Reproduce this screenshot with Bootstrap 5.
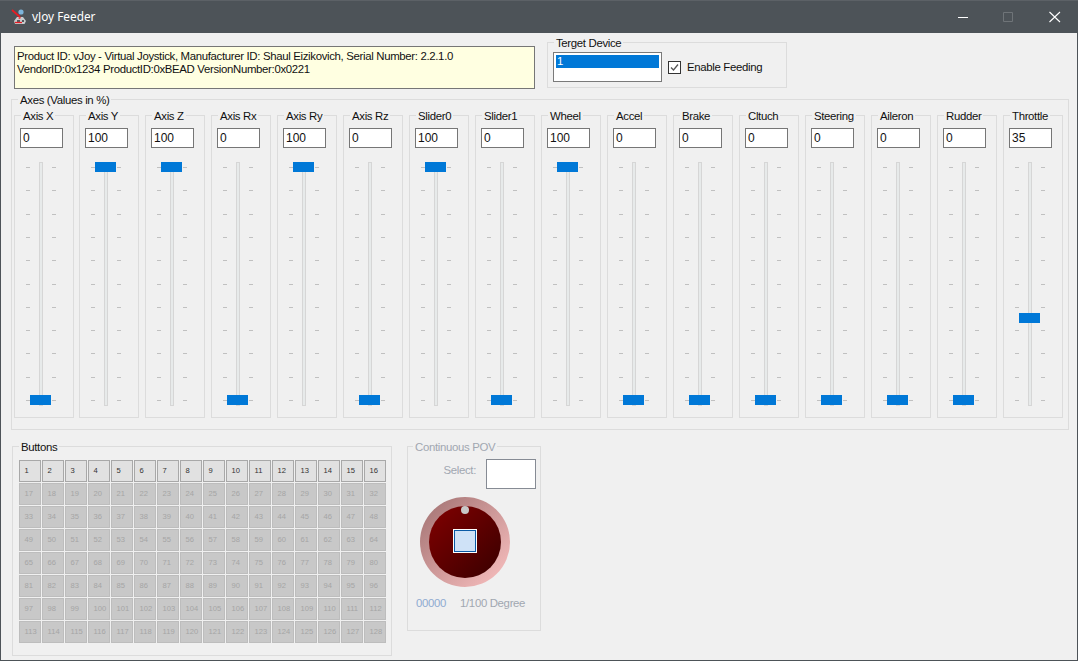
<!DOCTYPE html>
<html lang="en">
<head>
<meta charset="utf-8">
<title>vJoy Feeder</title>
<link href="https://cdn.jsdelivr.net/npm/bootstrap@5.3.0/dist/css/bootstrap.min.css" rel="stylesheet">
<style>
html,body{margin:0;height:100%;overflow:hidden;background:#f0f0f0}
body{font:11.4px/13px "Liberation Sans",Arial,sans-serif;letter-spacing:-.33px;color:#111}
.win{width:1078px;height:661px;border:1px solid #4d5358;border-top:0;background:#f0f0f0}
.titlebar{height:33px;margin:0 -1px;background:#4d5358;border-top:1px solid #5c6166;color:#fff;font:11.8px/1 "Noto Sans",sans-serif;letter-spacing:0}
.tb-icon{margin-left:11px;margin-right:5px}
.tb-ctl{width:46px;height:32px}
.pane{padding:2px 0 0 10px}
.gbox{border:1px solid #dcdcdc;margin:0;padding:0;min-width:0}
.gbox>legend{float:none;width:auto;height:14px;margin:0;padding:0 2px;font:inherit;line-height:16px;color:#111}
.info{width:521px;height:43px;margin:11px 0 0 3px;padding:3px 2px;border:1px solid #767676;background:#ffffe1;line-height:13px}
.tdev{width:240px;height:53px;margin-left:12px;padding:3px 5px 0}
.tdev>legend{margin-left:1px}
.lbox{width:109px;height:30px;padding:2px;background:#fff;border:1px solid #7a7a7a}
.lsel{background:#0078d7;color:#fff;height:13px;padding-left:1px}
.chk{width:13px;height:13px;margin-left:6px;border:1px solid #333;background:#fff;display:block}
.chk-l{margin-left:6px}
.axes{width:1058px;height:338px;margin-top:3px;padding:2px 2px 0}
.axes>legend{margin-left:4px}
.ax{width:60px;height:310px;margin-right:6px;padding:6px 5px 0;flex:none}
.ax-f{margin-right:5px}
.gbox.ax>legend{margin-left:1px;white-space:nowrap}
.val{width:43px;height:20px;border:1px solid #767676;background:#fff;padding:2px;line-height:15px;font-size:12px;letter-spacing:0;color:#111}
.sld{position:relative;width:46px;height:244px;margin-top:14px}
.sld::before,.sld::after{content:"";position:absolute;top:5px;width:4px;height:234px;background:repeating-linear-gradient(#c0c0c0 0 1px,transparent 1px 23.3px)}
.sld::before{left:6px}
.sld::after{left:32px}
.trk{position:absolute;left:19px;top:0;bottom:0;width:4px;background:#e7eaea;border:1px solid #d6d6d6}
.thm{position:absolute;left:10px;width:21px;height:10px;background:#0078d7}
.btns{width:380px;height:217px;margin:9px 0 0 1px;padding:7px 6px 0}
.bgrid{display:grid;grid-template-columns:repeat(16,22px);grid-auto-rows:22px;gap:1px}
.bc{border:1px solid #bdbdbd;background:#c8c8c8;color:#a5a5a5;font-size:7.6px;letter-spacing:0;line-height:20px;padding-left:4.500px}
.bc.on{border-color:#a8a8a8;background:#e1e1e1;color:#333}
.pov{width:134px;height:192px;margin:9px 0 0 15px;padding:6px 4px 0 0;color:#a1a7b0}
.gbox.pov>legend{color:#a1a7b0;margin-left:5px}
.sel-l{margin:0 10px 8px 0}
.sel-b{width:50px;height:30px;border:1px solid #868b94;background:#fff}
.knob{display:block;margin:7px 0 0 11px}
.pov-f{margin:9px 0 0 8px;line-height:13px}
.pov-n{color:#8fabd0;margin-right:14px}
</style>
</head>
<body>
<div class="win">
  <div class="titlebar d-flex align-items-center">
    <svg class="tb-icon" width="16" height="16" viewBox="0 0 16 16">
      <circle cx="10" cy="3" r="2.6" fill="#7db4dc"/>
      <path d="M3 12l3-4h6l3 4-1.500 3H4z" fill="#c9cbcd"/>
      <path d="M6 11h3v2H6zM11 11h2v2h-2z" fill="#55595d"/>
      <path d="M1 1l8 7" stroke="#e81c24" stroke-width="1.800"/>
      <path d="M4 13.500h7" stroke="#e81c24" stroke-width="1.300"/>
      <path d="M7 9l3-1-1 2z" fill="#e81c24"/>
    </svg>
    <span>vJoy Feeder</span>
    <span class="ms-auto d-flex">
      <svg class="tb-ctl" viewBox="0 0 46 32"><path d="M18 16.500h10" stroke="#fff"/></svg>
      <svg class="tb-ctl" viewBox="0 0 46 32"><path d="M17.500 11.500h9v9h-9z" fill="none" stroke="#6f7478"/></svg>
      <svg class="tb-ctl" viewBox="0 0 46 32"><path d="M17.500 11l10.500 10M28 11L17.500 21" stroke="#fff" stroke-width="1.100"/></svg>
    </span>
  </div>
  <div class="pane">
    <div class="d-flex align-items-start">
      <div class="info">Product ID: vJoy - Virtual Joystick, Manufacturer ID: Shaul Eizikovich, Serial Number: 2.2.1.0<br>VendorID:0x1234 ProductID:0xBEAD VersionNumber:0x0221</div>
      <fieldset class="gbox tdev">
        <legend>Terget Device</legend>
        <div class="d-flex align-items-center">
          <div class="lbox"><div class="lsel">1</div></div>
          <svg class="chk" viewBox="0 0 11 11"><path d="M2 5.500l2.500 2.500L9 2.500" fill="none" stroke="#555" stroke-width="1.300"/></svg>
          <span class="chk-l">Enable Feeding</span>
        </div>
      </fieldset>
    </div>
    <fieldset class="gbox axes">
      <legend>Axes (Values in %)</legend>
      <div class="d-flex">
        <fieldset class="gbox ax ax-f"><legend>Axis X</legend><div class="val">0</div><div class="sld"><div class="trk"></div><div class="thm" style="top:233px"></div></div></fieldset>
        <fieldset class="gbox ax"><legend>Axis Y</legend><div class="val">100</div><div class="sld"><div class="trk"></div><div class="thm" style="top:0"></div></div></fieldset>
        <fieldset class="gbox ax"><legend>Axis Z</legend><div class="val">100</div><div class="sld"><div class="trk"></div><div class="thm" style="top:0"></div></div></fieldset>
        <fieldset class="gbox ax"><legend>Axis Rx</legend><div class="val">0</div><div class="sld"><div class="trk"></div><div class="thm" style="top:233px"></div></div></fieldset>
        <fieldset class="gbox ax"><legend>Axis Ry</legend><div class="val">100</div><div class="sld"><div class="trk"></div><div class="thm" style="top:0"></div></div></fieldset>
        <fieldset class="gbox ax"><legend>Axis Rz</legend><div class="val">0</div><div class="sld"><div class="trk"></div><div class="thm" style="top:233px"></div></div></fieldset>
        <fieldset class="gbox ax"><legend>Slider0</legend><div class="val">100</div><div class="sld"><div class="trk"></div><div class="thm" style="top:0"></div></div></fieldset>
        <fieldset class="gbox ax"><legend>Slider1</legend><div class="val">0</div><div class="sld"><div class="trk"></div><div class="thm" style="top:233px"></div></div></fieldset>
        <fieldset class="gbox ax"><legend>Wheel</legend><div class="val">100</div><div class="sld"><div class="trk"></div><div class="thm" style="top:0"></div></div></fieldset>
        <fieldset class="gbox ax"><legend>Accel</legend><div class="val">0</div><div class="sld"><div class="trk"></div><div class="thm" style="top:233px"></div></div></fieldset>
        <fieldset class="gbox ax"><legend>Brake</legend><div class="val">0</div><div class="sld"><div class="trk"></div><div class="thm" style="top:233px"></div></div></fieldset>
        <fieldset class="gbox ax"><legend>Cltuch</legend><div class="val">0</div><div class="sld"><div class="trk"></div><div class="thm" style="top:233px"></div></div></fieldset>
        <fieldset class="gbox ax"><legend>Steering</legend><div class="val">0</div><div class="sld"><div class="trk"></div><div class="thm" style="top:233px"></div></div></fieldset>
        <fieldset class="gbox ax"><legend>Aileron</legend><div class="val">0</div><div class="sld"><div class="trk"></div><div class="thm" style="top:233px"></div></div></fieldset>
        <fieldset class="gbox ax"><legend>Rudder</legend><div class="val">0</div><div class="sld"><div class="trk"></div><div class="thm" style="top:233px"></div></div></fieldset>
        <fieldset class="gbox ax"><legend>Throttle</legend><div class="val">35</div><div class="sld"><div class="trk"></div><div class="thm" style="top:151px"></div></div></fieldset>
      </div>
    </fieldset>
    <div class="d-flex align-items-start">
      <fieldset class="gbox btns">
        <legend>Buttons</legend>
        <div class="bgrid">
          <div class="bc on">1</div><div class="bc on">2</div><div class="bc on">3</div><div class="bc on">4</div><div class="bc on">5</div><div class="bc on">6</div><div class="bc on">7</div><div class="bc on">8</div><div class="bc on">9</div><div class="bc on">10</div><div class="bc on">11</div><div class="bc on">12</div><div class="bc on">13</div><div class="bc on">14</div><div class="bc on">15</div><div class="bc on">16</div>
          <div class="bc">17</div><div class="bc">18</div><div class="bc">19</div><div class="bc">20</div><div class="bc">21</div><div class="bc">22</div><div class="bc">23</div><div class="bc">24</div><div class="bc">25</div><div class="bc">26</div><div class="bc">27</div><div class="bc">28</div><div class="bc">29</div><div class="bc">30</div><div class="bc">31</div><div class="bc">32</div>
          <div class="bc">33</div><div class="bc">34</div><div class="bc">35</div><div class="bc">36</div><div class="bc">37</div><div class="bc">38</div><div class="bc">39</div><div class="bc">40</div><div class="bc">41</div><div class="bc">42</div><div class="bc">43</div><div class="bc">44</div><div class="bc">45</div><div class="bc">46</div><div class="bc">47</div><div class="bc">48</div>
          <div class="bc">49</div><div class="bc">50</div><div class="bc">51</div><div class="bc">52</div><div class="bc">53</div><div class="bc">54</div><div class="bc">55</div><div class="bc">56</div><div class="bc">57</div><div class="bc">58</div><div class="bc">59</div><div class="bc">60</div><div class="bc">61</div><div class="bc">62</div><div class="bc">63</div><div class="bc">64</div>
          <div class="bc">65</div><div class="bc">66</div><div class="bc">67</div><div class="bc">68</div><div class="bc">69</div><div class="bc">70</div><div class="bc">71</div><div class="bc">72</div><div class="bc">73</div><div class="bc">74</div><div class="bc">75</div><div class="bc">76</div><div class="bc">77</div><div class="bc">78</div><div class="bc">79</div><div class="bc">80</div>
          <div class="bc">81</div><div class="bc">82</div><div class="bc">83</div><div class="bc">84</div><div class="bc">85</div><div class="bc">86</div><div class="bc">87</div><div class="bc">88</div><div class="bc">89</div><div class="bc">90</div><div class="bc">91</div><div class="bc">92</div><div class="bc">93</div><div class="bc">94</div><div class="bc">95</div><div class="bc">96</div>
          <div class="bc">97</div><div class="bc">98</div><div class="bc">99</div><div class="bc">100</div><div class="bc">101</div><div class="bc">102</div><div class="bc">103</div><div class="bc">104</div><div class="bc">105</div><div class="bc">106</div><div class="bc">107</div><div class="bc">108</div><div class="bc">109</div><div class="bc">110</div><div class="bc">111</div><div class="bc">112</div>
          <div class="bc">113</div><div class="bc">114</div><div class="bc">115</div><div class="bc">116</div><div class="bc">117</div><div class="bc">118</div><div class="bc">119</div><div class="bc">120</div><div class="bc">121</div><div class="bc">122</div><div class="bc">123</div><div class="bc">124</div><div class="bc">125</div><div class="bc">126</div><div class="bc">127</div><div class="bc">128</div>
        </div>
      </fieldset>
      <fieldset class="gbox pov">
        <legend>Continuous POV</legend>
        <div class="d-flex justify-content-end align-items-center">
          <span class="sel-l">Select:</span>
          <div class="sel-b"></div>
        </div>
        <svg class="knob" width="92" height="92" viewBox="0 0 92 92">
          <defs>
            <linearGradient id="rg" x1="0" y1="0" x2="1" y2="1"><stop offset="0" stop-color="#a07070"/><stop offset="1" stop-color="#fcc2c2"/></linearGradient>
            <linearGradient id="ig" x1="0" y1="0" x2="1" y2="1"><stop offset="0" stop-color="#820000"/><stop offset="1" stop-color="#380000"/></linearGradient>
          </defs>
          <circle cx="46" cy="46" r="45" fill="url(#rg)"/>
          <circle cx="46" cy="46" r="36" fill="url(#ig)"/>
          <circle cx="46" cy="14" r="4" fill="#c8c8c8"/>
          <rect x="34.500" y="33.500" width="23" height="23" fill="#cfe2f7" stroke="#fff"/>
          <rect x="35.500" y="34.500" width="21" height="21" fill="#cfe2f7" stroke="#0a5aa5"/>
        </svg>
        <div class="pov-f"><span class="pov-n">00000</span><span>1/100 Degree</span></div>
      </fieldset>
    </div>
  </div>
</div>
</body>
</html>
